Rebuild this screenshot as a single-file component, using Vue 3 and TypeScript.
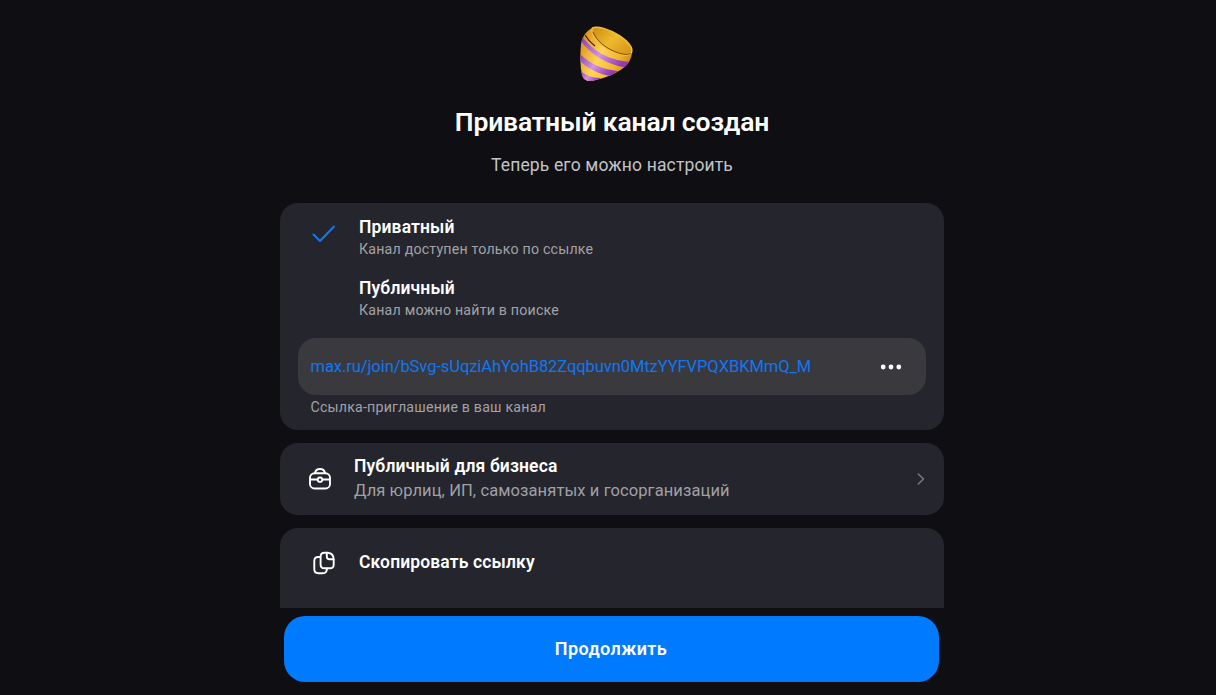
<script setup lang="ts">
interface ChannelKind {
  title: string
  hint: string
  selected: boolean
}

const kinds: ChannelKind[] = [
  { title: 'Приватный', hint: 'Канал доступен только по ссылке', selected: true },
  { title: 'Публичный', hint: 'Канал можно найти в поиске', selected: false },
]
const link = 'max.ru/join/bSvg-sUqziAhYohB82Zqqbuvn0MtzYYFVPQXBKMmQ_M'
</script>

<template>
  <main class="page">
    <svg class="party" viewBox="0 0 75 75" aria-hidden="true">
      <defs>
        <linearGradient id="gold" x1="0" y1="0.3" x2="1" y2="0.8">
          <stop offset="0" stop-color="#d98a12" />
          <stop offset="0.4" stop-color="#ffd65a" />
          <stop offset="0.7" stop-color="#f2b32c" />
          <stop offset="1" stop-color="#b96b0b" />
        </linearGradient>
        <linearGradient id="inner" x1="0" y1="0" x2="1" y2="0.7">
          <stop offset="0" stop-color="#c98b13" />
          <stop offset="0.55" stop-color="#eeb92c" />
          <stop offset="1" stop-color="#d99a1c" />
        </linearGradient>
        <linearGradient id="violet" x1="0" y1="0" x2="1" y2="0.5">
          <stop offset="0" stop-color="#7b35a5" />
          <stop offset="0.55" stop-color="#d493e6" />
          <stop offset="1" stop-color="#903ab4" />
        </linearGradient>
        <clipPath id="cone">
          <path d="M22.5 13 C16 16 12 22 11 29 C10 40 10 51 12 60 Q14 66.500 21 66 C36 63.500 53 56 59 47 Q62 42 62 37Z" />
        </clipPath>
      </defs>
      <g clip-path="url(#cone)">
        <rect x="8" y="10" width="56" height="58" fill="url(#gold)" />
        <path d="M11 20 C23 37 40 46 62 47 L56 52.500 C38 50 21 40 10 25Z" fill="url(#violet)" />
        <path d="M8 37 C19 49 33 55 48 56 L41 61 C27 59 16 52 8 44Z" fill="url(#violet)" />
        <path d="M9 55 C15 60 22 63 31 63 L22 68 L12 67Z" fill="url(#violet)" />
        <path d="M15 20 C18 25 21 28 25 31" fill="none" stroke="#402013" stroke-width="1.300" />
      </g>
      <path d="M22.500 13 C27 10.500 39 14 49 20.500 C58 26.500 63 33 61.500 37.500 C58 43 43 38 33 31 C25 25 20 17 22.500 13Z" fill="url(#inner)" stroke="#f5be38" stroke-width="1.500" />
      <path d="M23 17 C26 25 35 33 46 37 C53 40 59 40 61 38" fill="none" stroke="#73420d" stroke-width="0.900" />
    </svg>

    <h1 class="title">Приватный канал создан</h1>
    <p class="subtitle">Теперь его можно настроить</p>

    <div class="cards">
      <section class="card access">
        <div v-for="kind in kinds" :key="kind.title" class="kind">
          <div class="mark">
            <svg v-if="kind.selected" width="24" height="20" viewBox="0 0 24 20">
              <path d="M1.500 10.500 L8 17 L22 2.500" fill="none" stroke="#1278ee" stroke-width="2" stroke-linecap="round" stroke-linejoin="round" />
            </svg>
          </div>
          <div>
            <div class="name">{{ kind.title }}</div>
            <div class="hint">{{ kind.hint }}</div>
          </div>
        </div>
        <div class="link-box">
          <span class="link">{{ link }}</span>
          <svg width="22" height="6" viewBox="0 0 22 6" fill="#fff">
            <circle cx="3.200" cy="3" r="2.400" />
            <circle cx="11" cy="3" r="2.400" />
            <circle cx="18.800" cy="3" r="2.400" />
          </svg>
        </div>
        <div class="hint caption">Ссылка-приглашение в ваш канал</div>
      </section>

      <section class="card business">
        <svg class="case" width="24" height="24" viewBox="0 0 24 24" fill="none" stroke="#fff" stroke-width="1.900">
          <path d="M7 6.500 C7.300 3.200 8.800 2 12 2 C15.200 2 16.700 3.200 17 6.500" />
          <rect x="2" y="6.300" width="20" height="15.200" rx="4.500" />
          <path d="M2 12.500 H9.700 M14.300 12.500 H22" />
          <circle cx="12" cy="12.700" r="2.200" />
        </svg>
        <div class="business-text">
          <div class="name">Публичный для бизнеса</div>
          <div class="detail">Для юрлиц, ИП, самозанятых и госорганизаций</div>
        </div>
        <svg width="8" height="14" viewBox="0 0 8 14">
          <path d="M1.300 2 L6.500 7 L1.300 12" fill="none" stroke="#77777d" stroke-width="1.600" stroke-linecap="round" stroke-linejoin="round" />
        </svg>
      </section>

      <section class="card copy">
        <svg class="pages" width="24" height="24" viewBox="0 0 24 24" fill="none" stroke="#fff" stroke-width="1.900" stroke-linecap="round" stroke-linejoin="round">
          <path d="M12.300 1.800 H15.800 Q21.700 2.500 21.700 8.500 V13.500 Q21.700 17.300 18 17.300 H12.300 Q8.600 17.300 8.600 13.500 V5.500 Q8.600 1.800 12.300 1.800Z" />
          <path d="M14.800 2 V5.500 Q14.800 8.300 17.600 8.300 H21.500" />
          <path d="M8.300 6 H6.200 Q2.300 6 2.300 9.800 V18.300 Q2.300 22.200 6.200 22.200 H11 Q14.700 22.200 15 17.700" />
        </svg>
        <div class="name">Скопировать ссылку</div>
      </section>
    </div>

    <button class="continue" type="button">Продолжить</button>
  </main>
</template>

<style>
body {
  margin: 0;
  background: #0f0f13;
}
</style>

<style scoped>
.page {
  box-sizing: border-box;
  width: 664px;
  height: 695px;
  margin-left: 280px;
  display: flex;
  flex-direction: column;
  align-items: center;
  padding-top: 15px;
  overflow: hidden;
  font-family: Roboto, "Noto Sans", sans-serif;
  color: #fff;
}
.party {
  flex: none;
  width: 75px;
  height: 75px;
  margin-right: 9px;
}
.title {
  margin: 14px 0 0;
  font-size: 26.5px;
  line-height: 36px;
  font-weight: 600;
  letter-spacing: -0.15px;
  white-space: nowrap;
}
.subtitle {
  margin: 13px 0 0;
  font-size: 17.5px;
  line-height: 24px;
  letter-spacing: 0.14px;
  color: #c3c3c7;
  white-space: nowrap;
}
.cards {
  width: 100%;
  height: 405px;
  margin-top: 26px;
  flex: none;
  display: flex;
  flex-direction: column;
  gap: 13px;
  overflow: hidden;
}
.card {
  box-sizing: border-box;
  flex: none;
  border-radius: 18px;
  background: #25262d;
}
.access {
  height: 227px;
  padding: 13px 18px 0;
}
.kind {
  display: flex;
  height: 61px;
}
.mark {
  width: 61px;
  padding: 8px 0 0 14px;
  box-sizing: border-box;
}
.name {
  font-size: 17.5px;
  line-height: 22px;
  font-weight: 600;
  letter-spacing: 0.13px;
  white-space: nowrap;
}
.hint {
  font-size: 14.2px;
  line-height: 22px;
  letter-spacing: 0.2px;
  color: #a2a2a7;
  white-space: nowrap;
}
.link-box {
  box-sizing: border-box;
  height: 57px;
  padding: 0 24px 0 12.5px;
  border-radius: 18px;
  background: #39393e;
  display: flex;
  align-items: center;
  justify-content: space-between;
}
.link {
  font-size: 16.5px;
  letter-spacing: -0.07px;
  color: #0f77f5;
}
.caption {
  margin: 1px 0 0 12.5px;
}
.business {
  height: 72px;
  padding: 0 19px 0 28px;
  display: flex;
  align-items: center;
}
.case {
  margin-right: 22px;
}
.business-text {
  flex: 1;
}
.business-text .name {
  margin-top: 1px;
}
.detail {
  font-size: 16.5px;
  line-height: 27px;
  letter-spacing: 0.1px;
  color: #a0a0a5;
}
.copy {
  height: 100px;
  padding: 23px 0 0 32px;
  display: flex;
  align-items: flex-start;
}
.pages {
  margin-right: 23px;
}
.continue {
  flex: none;
  width: 655px;
  height: 66px;
  margin-top: 8px;
  margin-right: 2px;
  border: 0;
  border-radius: 21px;
  background: #007aff;
  color: #fff;
  font: 600 18px/24px Roboto, "Noto Sans", sans-serif;
  letter-spacing: 0.4px;
}
</style>
